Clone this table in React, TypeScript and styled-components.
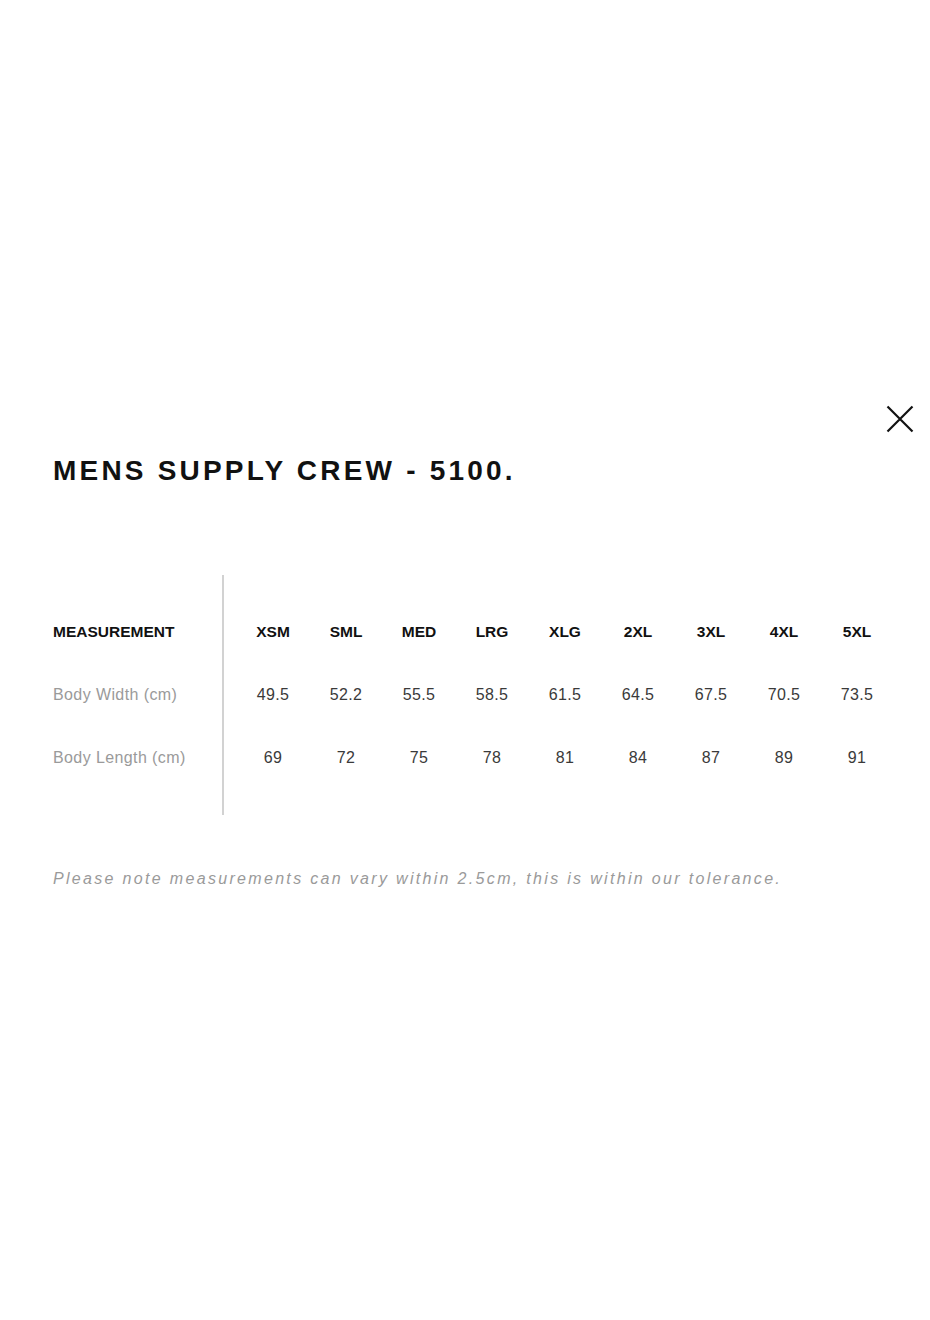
import React from 'react';
import styled, { createGlobalStyle } from 'styled-components';

const GlobalStyle = createGlobalStyle`
  html, body {
    margin: 0;
    padding: 0;
    background: #fff;
  }
  body {
    font-family: "Liberation Sans", Arial, Helvetica, sans-serif;
    color: #111;
  }
`;

const Page = styled.div`
  width: 930px;
  min-height: 1320px;
  box-sizing: border-box;
  padding: 405px 16px 0 53px;
`;

const TopBar = styled.div`
  display: flex;
  justify-content: flex-end;
  height: 28px;
`;

const CloseButton = styled.button`
  width: 28px;
  height: 28px;
  padding: 0;
  border: 0;
  background: none;
  cursor: pointer;
  display: flex;
  align-items: center;
  justify-content: center;
`;

const Title = styled.h2`
  margin: 22px 0 0;
  font-size: 28px;
  line-height: 32px;
  font-weight: 700;
  letter-spacing: 3.2px;
  color: #111;
`;

const Table = styled.div`
  display: flex;
  margin-top: 88px;
`;

const LabelColumn = styled.div`
  width: 169px;
  padding: 25px 0 26px;
`;

const Divider = styled.div`
  width: 2px;
  height: 240px;
  background: #d2d2d2;
`;

const SizeGrid = styled.div`
  display: grid;
  grid-template-columns: repeat(9, 73px);
  grid-auto-rows: 63px;
  padding: 25px 0 26px 12.5px;
`;

const Cell = styled.div<{ $head?: boolean; $align?: 'left' | 'center' }>`
  height: 63px;
  display: flex;
  align-items: center;
  justify-content: ${p => (p.$align === 'left' ? 'flex-start' : 'center')};
  font-size: ${p => (p.$head ? '15.5px' : '16px')};
  font-weight: ${p => (p.$head ? 700 : 400)};
  letter-spacing: ${p => (p.$head ? '0' : '0.4px')};
  color: ${p => (p.$head ? '#111' : '#3a3a3a')};
  white-space: nowrap;
`;

const RowLabel = styled(Cell)`
  color: #9a9a9a;
`;

const Note = styled.p`
  margin: 55px 0 0;
  font-size: 16px;
  font-style: italic;
  letter-spacing: 2.32px;
  color: #9a9a9a;
`;

const sizes = ['XSM', 'SML', 'MED', 'LRG', 'XLG', '2XL', '3XL', '4XL', '5XL'];

const rows = [
  { label: 'Body Width (cm)', values: ['49.5', '52.2', '55.5', '58.5', '61.5', '64.5', '67.5', '70.5', '73.5'] },
  { label: 'Body Length (cm)', values: ['69', '72', '75', '78', '81', '84', '87', '89', '91'] },
];

const CloseIcon = () => (
  <svg width="28" height="28" viewBox="0 0 28 28" fill="none">
    <path d="M1.5 1.5 L26.5 26.5 M26.5 1.5 L1.5 26.5" stroke="#111" strokeWidth="2.2" />
  </svg>
);

const App = () => {
  return (
    <>
      <GlobalStyle />
      <Page>
        <TopBar>
          <CloseButton aria-label="Close">
            <CloseIcon />
          </CloseButton>
        </TopBar>
        <Title>MENS SUPPLY CREW - 5100.</Title>
        <Table>
          <LabelColumn>
            <Cell $head $align="left">MEASUREMENT</Cell>
            {rows.map(r => (
              <RowLabel key={r.label} $align="left">{r.label}</RowLabel>
            ))}
          </LabelColumn>
          <Divider />
          <SizeGrid>
            {sizes.map(s => (
              <Cell key={s} $head>{s}</Cell>
            ))}
            {rows.map(r =>
              r.values.map((v, i) => <Cell key={r.label + i}>{v}</Cell>)
            )}
          </SizeGrid>
        </Table>
        <Note>Please note measurements can vary within 2.5cm, this is within our tolerance.</Note>
      </Page>
    </>
  );
};

export default App;
